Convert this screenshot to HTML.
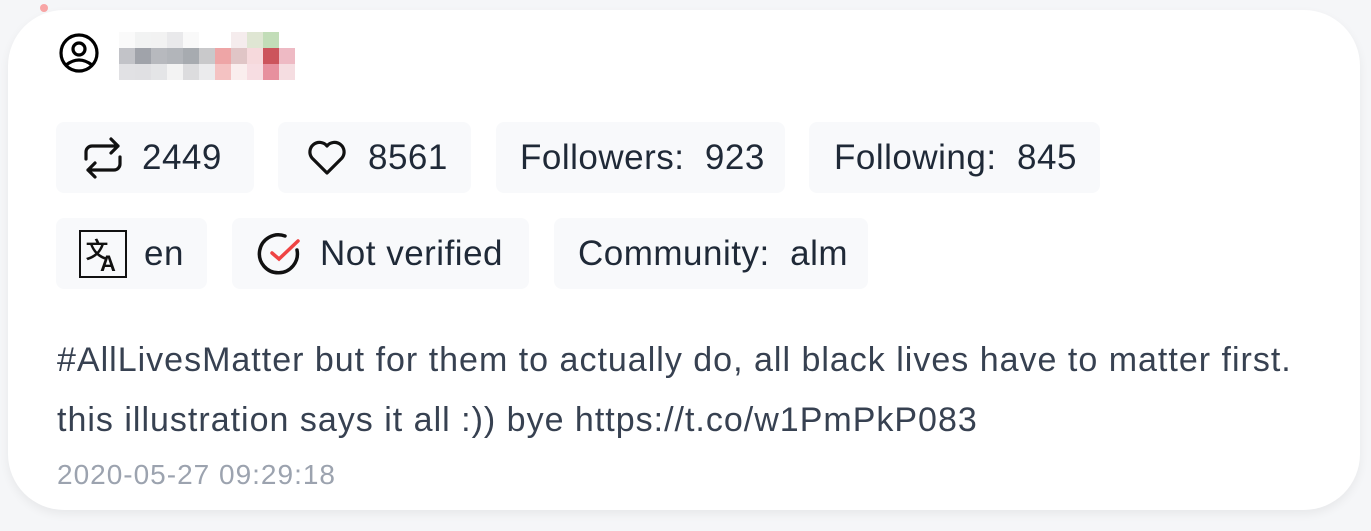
<!DOCTYPE html>
<html><head><style>
html,body{margin:0;padding:0;width:1371px;height:531px;background:#f5f6f8;overflow:hidden;font-family:"Liberation Sans",Arial,sans-serif;}
.card{position:absolute;left:8px;top:10px;width:1352px;height:500px;background:#fff;border-radius:56px;box-shadow:0 4px 10px rgba(0,0,0,0.06);}
.dot{position:absolute;left:40px;top:4px;width:8px;height:8px;border-radius:50%;background:#f8a5a5;}
.chip{position:absolute;height:71px;background:#f8f9fb;border-radius:8px;display:flex;align-items:center;font-size:35px;letter-spacing:0.5px;color:#1f2937;box-sizing:border-box;white-space:nowrap;}
.px{position:absolute;width:16px;height:16px;}
.txt{position:absolute;left:57px;font-size:34px;letter-spacing:1px;color:#374151;white-space:nowrap;line-height:40px;}
</style></head><body>
<div class="dot"></div>
<div class="card"></div>
<svg style="position:absolute;left:59px;top:33px" width="42" height="42" viewBox="0 0 42 42" fill="none" stroke="#000" stroke-width="3.2">
<circle cx="20" cy="20" r="18"/><circle cx="20" cy="16" r="6"/><path d="M7 32 Q20 22 33 32"/></svg>
<div class="chip" style="left:56px;top:122px;width:198px;padding-left:24px">
<svg width="46" height="46" viewBox="0 0 46 46" fill="none" stroke="#111" stroke-width="3.2" stroke-linecap="round" stroke-linejoin="round"><path d="M6 24V17a6 6 0 0 1 6-6h26M31 4l7 7-7 7"/><path d="M40 22v7a6 6 0 0 1-6 6H8M15 42l-7-7 7-7"/></svg>
<span style="margin-left:16px">2449</span></div>
<div class="chip" style="left:278px;top:122px;width:193px;padding-left:28px">
<svg width="42" height="40" viewBox="0 0 42 40" fill="none" stroke="#111" stroke-width="3.2" stroke-linejoin="round"><path d="M21 35 L6 20 A9 9 0 0 1 21 8 A9 9 0 0 1 36 20 Z"/></svg>
<span style="margin-left:20px">8561</span></div>
<div class="chip" style="left:496px;top:122px;width:289px;padding-left:24px">Followers:&nbsp; 923</div>
<div class="chip" style="left:809px;top:122px;width:291px;padding-left:25px">Following:&nbsp; 845</div>
<div class="chip" style="left:56px;top:218px;width:151px;padding-left:23px">
<svg width="48" height="48" viewBox="0 0 48 48"><rect x="1" y="1" width="46" height="46" fill="none" stroke="#111" stroke-width="2"/><text x="7" y="28" font-size="22" font-weight="bold" font-family="Liberation Serif,serif" fill="#111">文</text><text x="21" y="41" font-size="22" font-weight="bold" font-family="Liberation Sans,sans-serif" fill="#111">A</text></svg>
<span style="margin-left:17px">en</span></div>
<div class="chip" style="left:232px;top:218px;width:297px;padding-left:25px">
<svg width="46" height="46" viewBox="0 0 46 46" fill="none" stroke-width="3.5" stroke-linecap="round"><path d="M40 19 A19 19 0 1 1 28 5" stroke="#111"/><path d="M15 22 L22 28 L41 10" stroke="#ef4444"/></svg>
<span style="margin-left:17px">Not verified</span></div>
<div class="chip" style="left:554px;top:218px;width:314px;padding-left:24px">Community:&nbsp; alm</div>
<div class="txt" style="top:340px">#AllLivesMatter but for them to actually do, all black lives have to matter first.</div>
<div class="txt" style="top:400px">this illustration says it all :)) bye https://t.co/w1PmPkP083</div>
<div class="txt" style="top:455px;font-size:28px;color:#9ca3af">2020-05-27 09:29:18</div>
<div style="position:absolute;left:119px;top:16px">
<div class="px" style="left:0;top:16px;background:#fafafa"></div><div class="px" style="left:16px;top:16px;background:#f2f3f3"></div><div class="px" style="left:32px;top:16px;background:#f2f2f2"></div><div class="px" style="left:48px;top:16px;background:#e9e9eb"></div><div class="px" style="left:64px;top:16px;background:#f9f9f9"></div><div class="px" style="left:96px;top:16px;background:#fff"></div><div class="px" style="left:112px;top:16px;background:#f5eced"></div><div class="px" style="left:128px;top:16px;background:#dfe6d3"></div><div class="px" style="left:144px;top:16px;background:#c2ddb8"></div>
<div class="px" style="left:0;top:32px;background:#c2c3c8"></div><div class="px" style="left:16px;top:32px;background:#a0a3aa"></div><div class="px" style="left:32px;top:32px;background:#b7b9be"></div><div class="px" style="left:48px;top:32px;background:#b2b5ba"></div><div class="px" style="left:64px;top:32px;background:#a7abb0"></div><div class="px" style="left:80px;top:32px;background:#c9c9cb"></div><div class="px" style="left:96px;top:32px;background:#eea5a6"></div><div class="px" style="left:112px;top:32px;background:#e0c5c6"></div><div class="px" style="left:128px;top:32px;background:#f6d9dc"></div><div class="px" style="left:144px;top:32px;background:#cc545c"></div><div class="px" style="left:160px;top:32px;background:#eebac4"></div>
<div class="px" style="left:0;top:48px;background:#e1e1e4"></div><div class="px" style="left:16px;top:48px;background:#e0e0e3"></div><div class="px" style="left:32px;top:48px;background:#e4e5e7"></div><div class="px" style="left:48px;top:48px;background:#f3f3f3"></div><div class="px" style="left:64px;top:48px;background:#dcdcde"></div><div class="px" style="left:80px;top:48px;background:#ebebed"></div><div class="px" style="left:96px;top:48px;background:#f4c2c2"></div><div class="px" style="left:112px;top:48px;background:#faeeee"></div><div class="px" style="left:128px;top:48px;background:#f7dde2"></div><div class="px" style="left:144px;top:48px;background:#e7909e"></div><div class="px" style="left:160px;top:48px;background:#f5dde1"></div>
</div>
</body></html>
